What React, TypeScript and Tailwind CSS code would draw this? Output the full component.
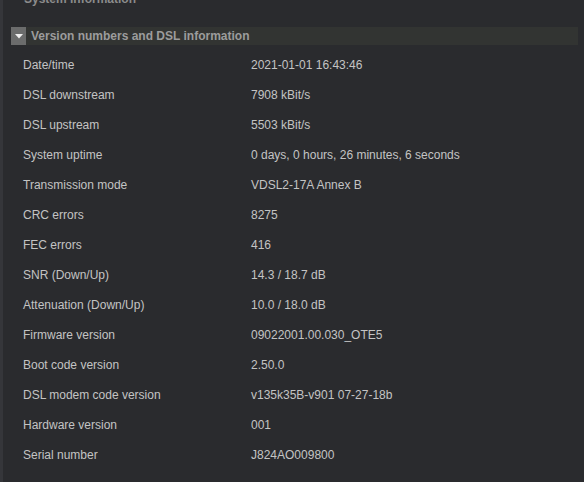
const rows: [string, string][] = [
  ["Date/time", "2021-01-01 16:43:46"],
  ["DSL downstream", "7908 kBit/s"],
  ["DSL upstream", "5503 kBit/s"],
  ["System uptime", "0 days, 0 hours, 26 minutes, 6 seconds"],
  ["Transmission mode", "VDSL2-17A Annex B"],
  ["CRC errors", "8275"],
  ["FEC errors", "416"],
  ["SNR (Down/Up)", "14.3 / 18.7 dB"],
  ["Attenuation (Down/Up)", "10.0 / 18.0 dB"],
  ["Firmware version", "09022001.00.030_OTE5"],
  ["Boot code version", "2.50.0"],
  ["DSL modem code version", "v135k35B-v901 07-27-18b"],
  ["Hardware version", "001"],
  ["Serial number", "J824AO009800"],
];

export default function App() {
  return (
    <div
      className="h-[482px] w-[584px] overflow-hidden border-l-[3px] border-[#35363a] bg-[#2a2b2e]"
      style={{ fontFamily: '"Liberation Sans", Arial, sans-serif' }}
    >
      <div className="-mt-[9px] pl-[21px] text-[12px] leading-[16px] font-bold text-[#8c8c8c]">
        System information
      </div>
      <div className="mt-[20px] ml-[8px] mr-[6px] flex h-[18px] items-center bg-[#323432]">
        <div className="flex h-[18px] w-[15px] items-center justify-center bg-[#6b6c6c]">
          <svg width="8" height="5" viewBox="0 0 8 5">
            <path d="M0 0 L8 0 L4 4.5 Z" fill="#f0f0f0" />
          </svg>
        </div>
        <span className="pl-[5px] text-[12px] font-bold text-[#9c9c9c]">
          Version numbers and DSL information
        </span>
      </div>
      <div className="mt-[5px]">
        {rows.map(([label, value]) => (
          <div key={label} className="flex h-[30px] items-center text-[12px] text-[#c4c4c4]">
            <span className="w-[248px] pl-[20px]">{label}</span>
            <span>{value}</span>
          </div>
        ))}
      </div>
    </div>
  );
}
